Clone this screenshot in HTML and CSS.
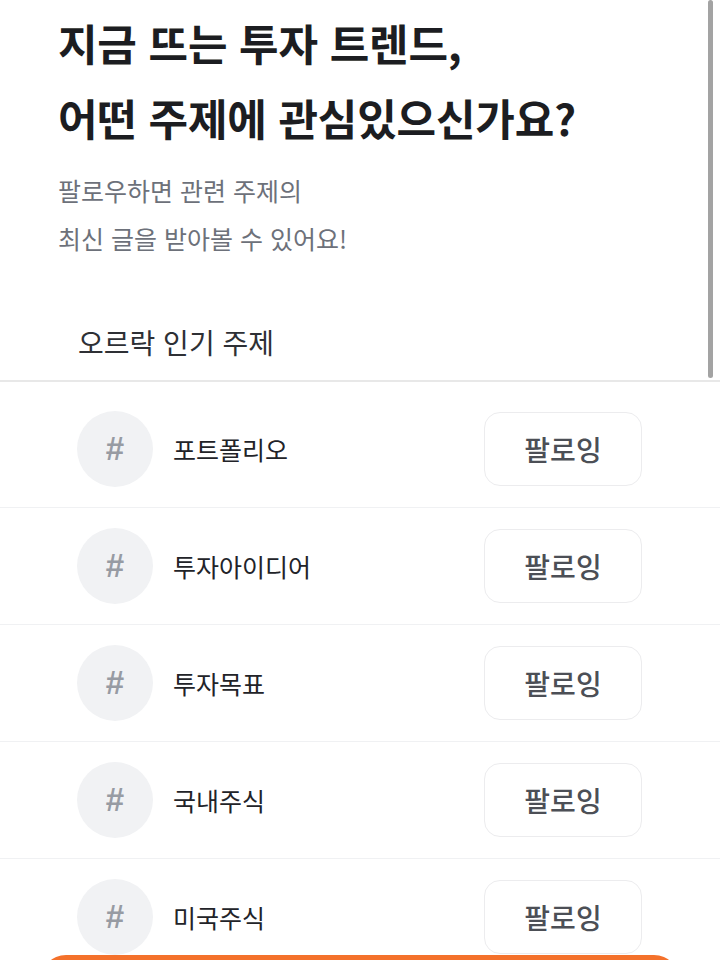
FILE: index.html
```html
<!DOCTYPE html>
<html lang="ko">
<head>
    <meta charset="UTF-8">
    <meta name="viewport" content="width=device-width, initial-scale=1.0">
    <title>관심 주제 선택</title>
    <link rel="stylesheet" href="styles.css">
</head>
<body>
    <div class="page">
        <!-- Intro -->
        <div class="intro">
            <h1 class="title">
                <span>지금 뜨는 투자 트렌드,</span>
                <span>어떤 주제에 관심있으신가요?</span>
            </h1>
            <p class="subtitle">
                <span>팔로우하면 관련 주제의</span>
                <span>최신 글을 받아볼 수 있어요!</span>
            </p>
        </div>

        <!-- Topic list -->
        <h2 class="section-title">오르락 인기 주제</h2>
        <ul class="topic-list">
            <li class="topic-item">
                <div class="topic-icon">#</div>
                <span class="topic-name">포트폴리오</span>
                <button class="follow-btn">팔로잉</button>
            </li>
            <li class="topic-item">
                <div class="topic-icon">#</div>
                <span class="topic-name">투자아이디어</span>
                <button class="follow-btn">팔로잉</button>
            </li>
            <li class="topic-item">
                <div class="topic-icon">#</div>
                <span class="topic-name">투자목표</span>
                <button class="follow-btn">팔로잉</button>
            </li>
            <li class="topic-item">
                <div class="topic-icon">#</div>
                <span class="topic-name">국내주식</span>
                <button class="follow-btn">팔로잉</button>
            </li>
            <li class="topic-item">
                <div class="topic-icon">#</div>
                <span class="topic-name">미국주식</span>
                <button class="follow-btn">팔로잉</button>
            </li>
        </ul>
    </div>

    <div class="scroll-thumb"></div>
    <div class="cta-bar"></div>
</body>
</html>
```

FILE: styles.css
```css
/* Topic follow screen */
body {
    font-family: 'Noto Sans CJK KR', 'Noto Sans', sans-serif;
    margin: 0;
    padding: 0;
    background: #fff;
    color: #1f2024;
    overflow: hidden;
}

.page {
    width: 720px;
}

.intro {
    padding: 5px 58px 0;
}

.title {
    margin: 0;
    font-size: 43px;
    font-weight: 700;
    letter-spacing: -0.2px;
    line-height: 75px;
    color: #1c1d21;
}

.title span,
.subtitle span {
    display: block;
}

.subtitle {
    margin: 11px 0 0;
    font-size: 25px;
    font-weight: 400;
    line-height: 48px;
    color: #6d717a;
}

.section-title {
    margin: 60px 0 0;
    padding: 0 78px 18px;
    font-size: 28px;
    font-weight: 400;
    line-height: 40px;
    color: #2e3035;
    border-bottom: 2px solid #e8e8e8;
}

.topic-list {
    list-style: none;
    margin: 0;
    padding: 9px 0 0;
}

.topic-item {
    display: flex;
    align-items: center;
    height: 116px;
    padding: 0 78px 0 77px;
    border-bottom: 1px solid #f0f1f3;
}

.topic-icon {
    width: 76px;
    height: 76px;
    border-radius: 50%;
    background: #f1f2f4;
    color: #979ba3;
    font-family: 'Liberation Sans', sans-serif;
    font-size: 33px;
    font-weight: 700;
    display: flex;
    align-items: center;
    justify-content: center;
}

.topic-name {
    flex: 1;
    margin-left: 20px;
    font-size: 25px;
    color: #222328;
}

.follow-btn {
    width: 158px;
    height: 74px;
    border: 1.5px solid #ececee;
    border-radius: 16px;
    background: #fff;
    font-family: inherit;
    font-size: 28px;
    font-weight: 500;
    color: #4c4f56;
    cursor: pointer;
}

.scroll-thumb {
    position: fixed;
    top: 0;
    right: 7px;
    width: 5px;
    height: 378px;
    border-radius: 3px;
    background: #a3a3a3;
}

.cta-bar {
    position: fixed;
    left: 40px;
    right: 40px;
    top: 955px;
    height: 64px;
    border-radius: 26px;
    background: #f4712b;
}
```
